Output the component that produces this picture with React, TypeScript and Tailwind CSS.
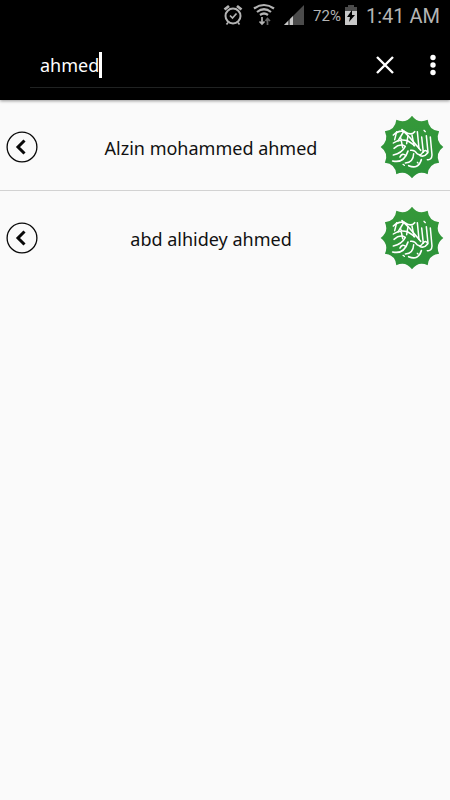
import React from 'react';

function polar(r: number, a: number) {
  return `${(96 + r * Math.sin(a)).toFixed(1)},${(96 - r * Math.cos(a)).toFixed(1)}`;
}

function scallopedStar() {
  const step = Math.PI / 6;
  let d = `M${polar(94, 0)}`;
  for (let i = 0; i < 12; i++) {
    d += ` Q${polar(71, (i + 0.5) * step)} ${polar(94, (i + 1) * step)}`;
  }
  return `${d} Z`;
}

function Badge() {
  return (
    <svg className="h-16 w-16 shrink-0" viewBox="0 0 192 192" aria-hidden="true">
      <defs>
        <linearGradient id="badge-green" x1="0" y1="0" x2="0" y2="1">
          <stop offset="0" stopColor="#36993a" />
          <stop offset="1" stopColor="#2b9239" />
        </linearGradient>
      </defs>
      <path d={scallopedStar()} fill="url(#badge-green)" />
      <g fill="none" stroke="#fff" strokeWidth="4.500" strokeLinecap="round" strokeLinejoin="round">
        <path d="M151 66 L156 120 Q155 136 142 134 M139 62 L144 112 M125 66 L130 112 M112 50 L117 100" />
        <path d="M66 44 L88 66 L122 106 M40 60 Q60 42 78 52 Q94 62 104 50" strokeWidth="5" />
        <path d="M96 60 L102 92 M72 48 L54 78 M50 50 L44 74" />
        <path d="M40 84 Q60 70 84 78 Q94 84 104 92 M62 68 L68 98 M84 62 L80 86" />
        <path d="M42 100 Q60 84 76 94 Q66 114 40 120" />
        <path d="M38 138 Q72 146 84 108 M60 126 Q66 112 78 122" strokeWidth="5" />
        <path d="M76 144 Q100 142 101 116 M92 106 Q104 104 111 116 Q123 124 128 112 Q138 100 143 114 Q132 128 119 121" />
        <path d="M86 152 Q115 164 124 134" strokeWidth="5" />
        <path d="M132 46 L136 50 M69 148 L73 151 M112 142 L114 144" strokeWidth="4" />
      </g>
    </svg>
  );
}

function Row({ name }: { name: string }) {
  return (
    <li className="flex h-[91px] items-center border-b border-[#d2d2d2] px-[6px] pt-1 last:border-transparent">
      <button aria-label={`Open ${name}`} className="flex h-8 w-8 shrink-0 items-center justify-center">
        <svg className="h-8 w-8" viewBox="0 0 32 32" fill="none" stroke="#080808">
          <circle cx="16" cy="16" r="14.9" strokeWidth="1.3" />
          <path d="M18.500 9.500 L12 16 L18.500 22.500" strokeWidth="3" />
        </svg>
      </button>
      <span className="flex-1 pl-1 pt-0.5 text-center text-[18px] leading-6 text-[#111]">{name}</span>
      <Badge />
    </li>
  );
}

export default function App() {
  return (
    <div className="min-h-screen bg-[#fafafa] font-['Noto_Sans',sans-serif]">
      <header className="bg-black text-white shadow-[0_1px_3px_rgba(0,0,0,0.4)]">
        <div className="flex h-8 items-center justify-end pr-[10px] font-['Roboto',sans-serif] text-[#b4b4b4]">
          <svg className="h-8 w-[92px]" viewBox="0 0 92 32" fill="none" stroke="#b4b4b4" aria-hidden="true">
            <circle cx="12" cy="16" r="7.5" strokeWidth="2" />
            <path d="M9 15.5 L11.5 18 L15.5 13.5 M7 22.5 L5.5 24.5 M17 22.5 L18.5 24.5" strokeWidth="1.7" />
            <path d="M3.5 9.5 L8 6 M16 6 L20.5 9.5" strokeWidth="2.8" />
            <path d="M33 8.5 Q43 1.5 53 8.5 M36 12 Q43 6.5 50 12 M39 15 Q43 12 47 15" strokeWidth="2.2" />
            <path d="M41 17 V24 M38.5 21.5 L41 24 L43.5 21.5" strokeWidth="1.7" />
            <path d="M46.500 25 V19 M44.500 21 L46.500 18.500 L49 21" stroke="#666" strokeWidth="1.7" />
            <path d="M63 25 L83 5 V25 Z" fill="#4b4b4b" stroke="none" />
            <path d="M63 25 L72 16 V25 Z" fill="#c8c8c8" stroke="none" />
            <path d="M68 18 V25" stroke="#000" strokeWidth="1" />
          </svg>
          <span className="text-[15px]">72%</span>
          <svg className="ml-[3px] h-8 w-[14px]" viewBox="0 0 14 32" aria-hidden="true">
            <path d="M4 5 H10 V7 H13 V11 H1 V7 H4 Z" fill="#4b4b4b" />
            <path d="M1 11 H13 V25 H1 Z" fill="#c8c8c8" />
            <path d="M8 10 L3 17 H6 L5 22 L11 15 H8 Z" fill="#000" />
          </svg>
          <span className="ml-2 text-xl">1:41 AM</span>
        </div>
        <div className="flex h-[68px] pl-[30px]">
          <div className="flex h-14 flex-1 items-center border-b border-[#202222] pl-[10px] pt-[10px]">
            <input aria-label="Search" defaultValue="ahmed" className="h-8 w-20 bg-transparent text-[18px] leading-6 text-white outline-none" />
            <span className="-ml-[21px] h-[26px] w-[3px] bg-white" />
            <button aria-label="Clear search" className="ml-auto mr-[15px]">
              <svg className="h-5 w-5" viewBox="0 0 20 20" stroke="white" strokeWidth="2.4">
                <path d="M2 2 L18 18 M18 2 L2 18" />
              </svg>
            </button>
          </div>
          <button aria-label="More options" className="flex h-[66px] w-10 justify-center pl-[5px]">
            <svg className="h-full w-2" viewBox="0 0 8 66" fill="white">
              <circle cx="4" cy="25.500" r="2.700" />
              <circle cx="4" cy="33" r="2.700" />
              <circle cx="4" cy="40.500" r="2.700" />
            </svg>
          </button>
        </div>
      </header>
      <ul>
        <Row name="Alzin mohammed ahmed" />
        <Row name="abd alhidey ahmed" />
      </ul>
    </div>
  );
}
